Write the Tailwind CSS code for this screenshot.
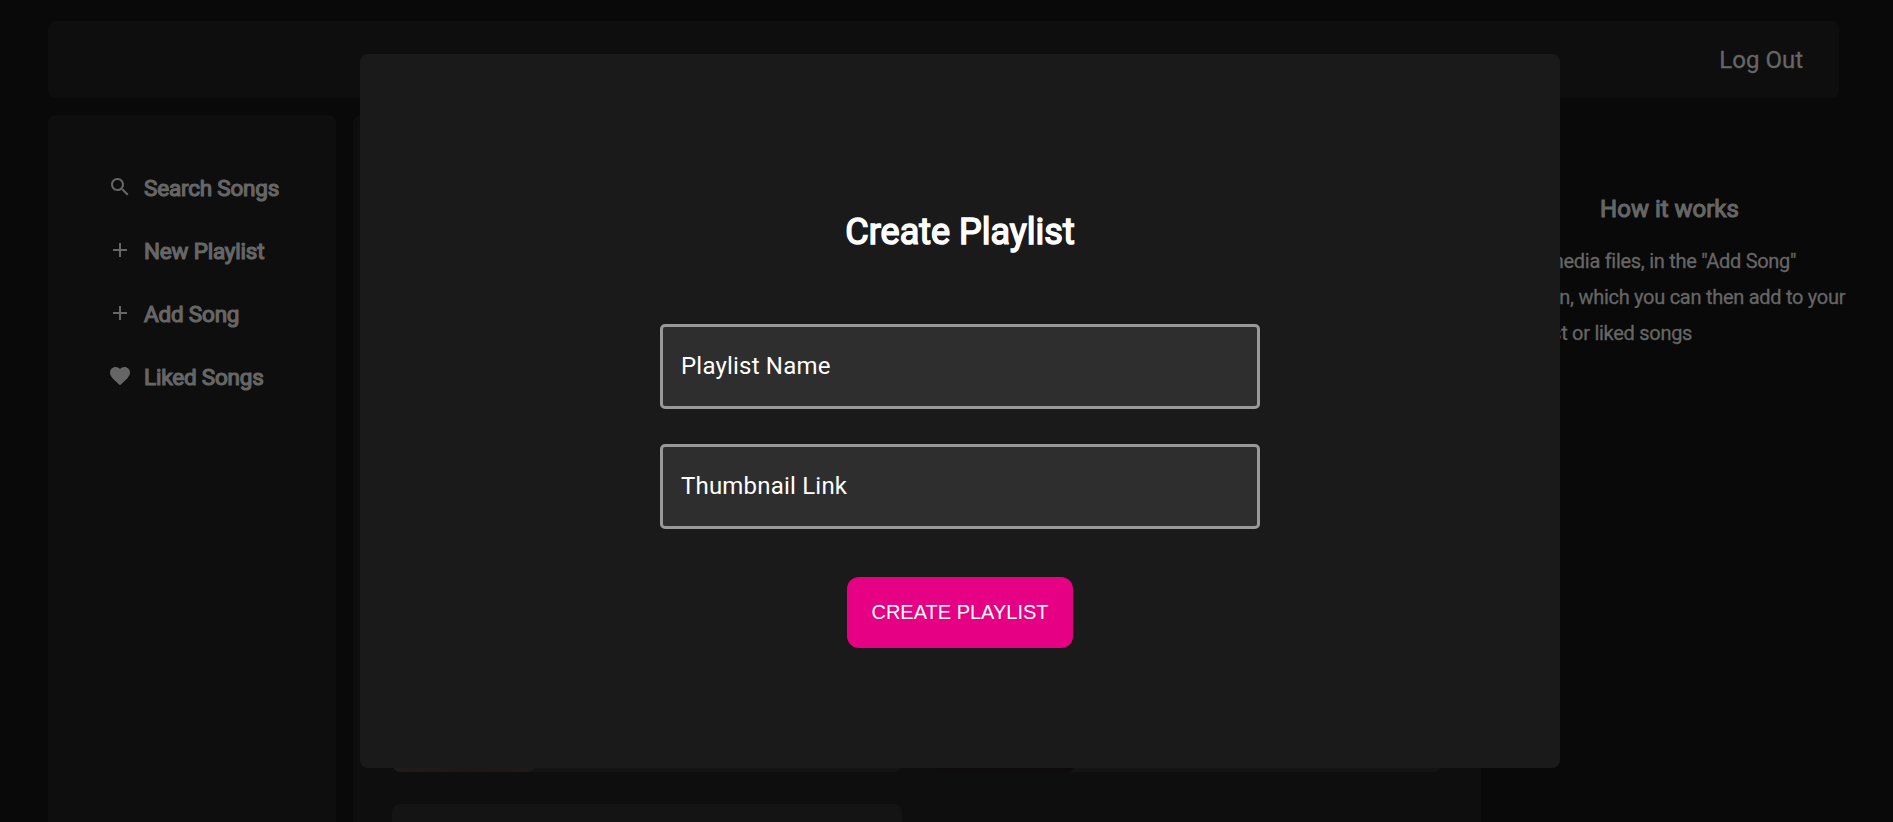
<!DOCTYPE html>
<html lang="en">
<head>
<meta charset="utf-8">
<title>Create Playlist</title>
<script src="https://cdn.jsdelivr.net/npm/@tailwindcss/browser@4"></script>
</head>
<body class="h-screen overflow-hidden bg-[#090909] font-[Roboto,sans-serif] text-[#666666]">
<div class="flex h-[822px] flex-col gap-[17px] overflow-hidden pt-[21px] pl-12">
  <header class="flex h-[77px] w-[1791px] shrink-0 items-center justify-end rounded-lg bg-[#0e0e0e] pr-9">
    <a class="text-2xl [-webkit-text-stroke:0.3px]">Log Out</a>
  </header>
  <div class="flex min-h-0 flex-1 gap-[17px]">
    <nav class="flex w-[288px] shrink-0 flex-col gap-[27px] rounded-t-lg bg-[#0e0e0e] pt-14 pl-[60px] text-[22.5px] leading-[34px] tracking-[-0.2px] [-webkit-text-stroke:1.2px]">
      <a class="flex h-9 gap-3"><svg class="mt-1 size-6" viewBox="0 0 24 24" fill="currentColor"><path d="M15.5 14h-.79l-.28-.27C15.41 12.59 16 11.11 16 9.5 16 5.91 13.09 3 9.5 3S3 5.91 3 9.5 5.91 16 9.5 16c1.61 0 3.09-.59 4.23-1.57l.27.28v.79l5 4.99L20.49 19l-4.99-5zm-6 0C7.01 14 5 11.99 5 9.5S7.01 5 9.5 5 14 7.01 14 9.5 11.99 14 9.5 14z"/></svg>Search Songs</a>
      <a class="flex h-9 gap-3"><svg class="mt-1 size-6" viewBox="0 0 24 24" fill="currentColor"><path d="M19 13h-6v6h-2v-6H5v-2h6V5h2v6h6v2z"/></svg>New Playlist</a>
      <a class="flex h-9 gap-3"><svg class="mt-1 size-6" viewBox="0 0 24 24" fill="currentColor"><path d="M19 13h-6v6h-2v-6H5v-2h6V5h2v6h6v2z"/></svg>Add Song</a>
      <a class="flex h-9 gap-3"><svg class="mt-1 size-6" viewBox="0 0 24 24" fill="currentColor"><path d="m12 21.35-1.45-1.32C5.4 15.36 2 12.28 2 8.5 2 5.42 4.42 3 7.5 3c1.74 0 3.41.81 4.5 2.09C13.09 3.81 14.76 3 16.5 3 19.58 3 22 5.42 22 8.5c0 3.78-3.4 6.86-8.55 11.54L12 21.35z"/></svg>Liked Songs</a>
    </nav>
    <main class="grid w-[1128px] shrink-0 grid-cols-[510px_508px] content-start gap-x-[31px] gap-y-8 overflow-hidden rounded-t-lg bg-[#0e0e0e] pt-[514px] pl-[39px]">
      <div class="flex h-[143px] overflow-hidden rounded-lg bg-[#141414]"><div class="w-[143px] rounded-lg bg-linear-to-r from-[#211d1d] via-[#1c1817] to-[#1f1a1a]"></div></div>
      <div class="flex h-[143px] overflow-hidden rounded-lg bg-[#141414]"><div class="w-[142px] rounded-lg bg-[#0e0b0c]"></div></div>
      <div class="h-[143px] rounded-lg bg-[#141414]"></div>
    </main>
    <aside class="flex w-[343px] shrink-0 flex-col items-center pt-[76px]">
      <h2 class="text-2xl leading-9 [-webkit-text-stroke:1.1px]">How it works</h2>
      <p class="mt-4 ml-[13px] text-xl leading-9 tracking-[-0.28px] whitespace-nowrap [-webkit-text-stroke:0.3px]">Add media files, in the "Add Song"<br>section, which you can then add to your<br>playlist or liked songs</p>
    </aside>
  </div>
</div>
<section class="absolute top-[54px] left-[360px] flex h-[714px] w-[1200px] flex-col items-center rounded-lg bg-[#1a1a1a] pt-[151px] text-white">
  <h1 class="text-4xl leading-[54px] [-webkit-text-stroke:1.5px]">Create Playlist</h1>
  <form class="mt-[65px] flex flex-col items-center">
    <input class="h-[85px] w-[600px] rounded-[5px] border-3 border-[#999999] bg-[#2e2e2e] px-[18px] pb-[2px] text-2xl tracking-[0.2px] placeholder:text-white" placeholder="Playlist Name">
    <input class="mt-[35px] h-[85px] w-[600px] rounded-[5px] border-3 border-[#999999] bg-[#2e2e2e] px-[18px] pb-[2px] text-2xl tracking-[0.2px] placeholder:text-white" placeholder="Thumbnail Link">
    <button type="button" class="mt-12 h-[71px] w-[226px] rounded-xl bg-[#e60084] pb-[2px] font-['Liberation_Sans',Arial,sans-serif] text-xl whitespace-nowrap">CREATE PLAYLIST</button>
  </form>
</section>
</body>
</html>
